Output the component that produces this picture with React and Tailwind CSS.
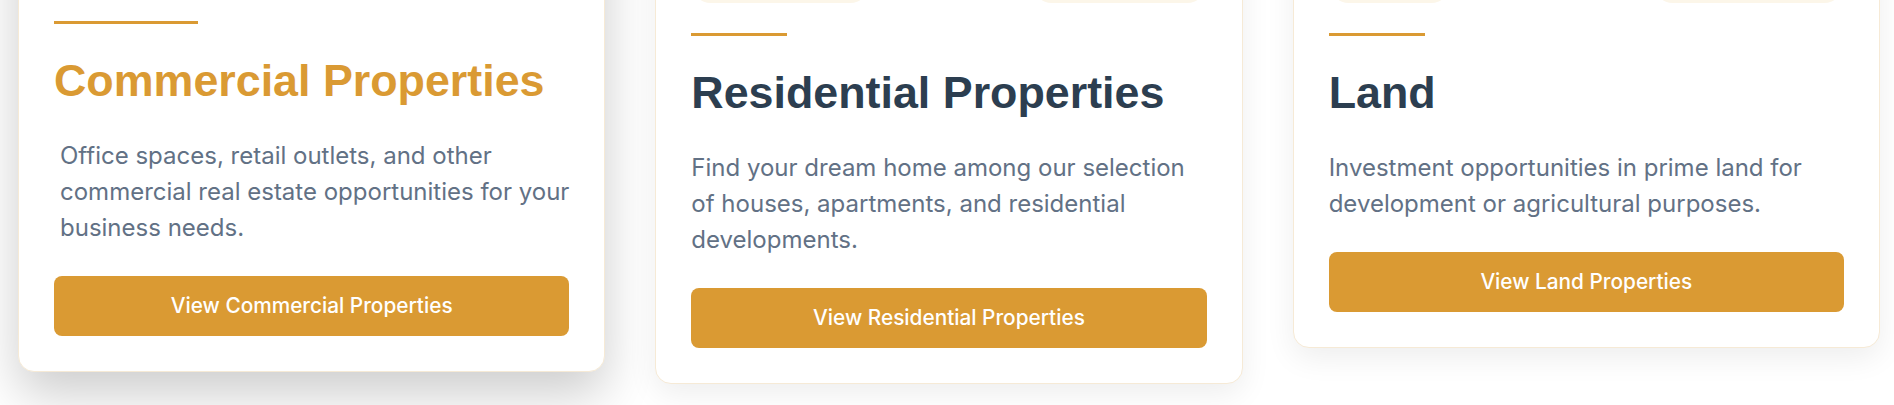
import React from "react";

const cards = [
  {
    title: "Commercial Properties",
    text: "Office spaces, retail outlets, and other commercial real estate opportunities for your business needs.",
    button: "View Commercial Properties",
    pills: ["w-[150px]", "w-[170px]"],
    active: true,
  },
  {
    title: "Residential Properties",
    text: "Find your dream home among our selection of houses, apartments, and residential developments.",
    button: "View Residential Properties",
    pills: ["w-[179px]", "w-[175px]"],
  },
  {
    title: "Land",
    text: "Investment opportunities in prime land for development or agricultural purposes.",
    button: "View Land Properties",
    pills: ["w-[122px]", "w-[191px]"],
  },
];

function PropertyCard({ card }) {
  const active = card.active;
  return (
    <div
      className={
        active
          ? "-translate-y-3 rounded-2xl border border-[#f6ead6] bg-white p-[35px] shadow-[0_22px_50px_rgba(0,0,0,0.2)]"
          : "rounded-2xl border border-[#f6ead6] bg-white p-[35px] shadow-[0_10px_30px_rgba(0,0,0,0.07)]"
      }
    >
      <div className="flex justify-between">
        <div className={`h-10 rounded-full bg-[#fcf6e9] ${card.pills[0]}`} />
        <div className={`h-10 rounded-full bg-[#fcf6e9] ${card.pills[1]}`} />
      </div>
      <div className={active ? "mt-[30px] h-[3px] w-[144px] bg-[#da9a33]" : "mt-[30px] h-[3px] w-[96px] bg-[#da9a33]"} />
      <h3
        className={
          active
            ? "mt-[30px] font-['Liberation_Sans',Arial,sans-serif] text-[44.8px] leading-[1.2] font-bold text-[#da9a33]"
            : "mt-[30px] font-['Liberation_Sans',Arial,sans-serif] text-[44.8px] leading-[1.2] font-bold text-[#2c3e50]"
        }
      >
        {card.title}
      </h3>
      <p
        className={
          active
            ? "mt-[30px] translate-x-[6px] text-[24px] leading-[36px] text-[#627185]"
            : "mt-[30px] text-[24px] leading-[36px] text-[#627185]"
        }
      >
        {card.text}
      </p>
      <button
        type="button"
        className="mt-[30px] flex h-[60px] w-full items-center justify-center rounded-lg bg-[#da9a33] text-[20.8px] font-medium text-white"
      >
        {card.button}
      </button>
    </div>
  );
}

export default function App() {
  return (
    <div className="h-[405px] overflow-hidden bg-white font-['Inter','Noto_Sans',sans-serif]">
      <div className="-mt-[73px] grid grid-cols-3 items-start gap-[50px] pl-[18px] pr-[14px]">
        {cards.map((card) => (
          <PropertyCard key={card.title} card={card} />
        ))}
      </div>
    </div>
  );
}
